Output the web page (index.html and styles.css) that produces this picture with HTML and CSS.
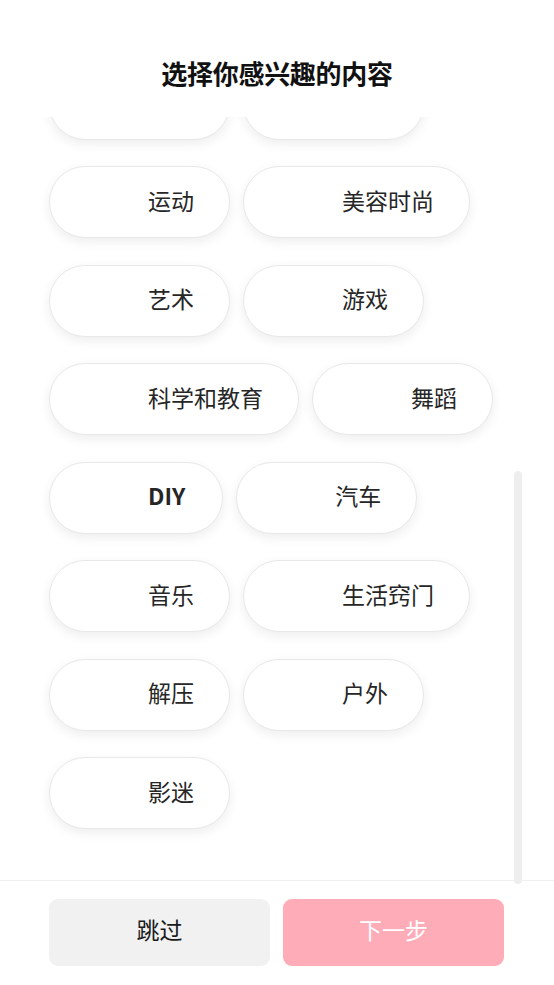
FILE: index.html
```html
<!DOCTYPE html>
<html lang="zh-CN">
<head>
<meta charset="utf-8">
<title>选择你感兴趣的内容</title>
<link rel="stylesheet" href="styles.css">
</head>
<body>
<div class="page">
  <header class="header">
    <h1 class="title">选择你感兴趣的内容</h1>
  </header>
  <main class="scroll">
    <div class="list">
      <div class="pill pill-clipped"></div>
      <div class="pill pill-clipped"></div>
      <div class="pill">运动</div>
      <div class="pill">美容时尚</div>
      <div class="pill">艺术</div>
      <div class="pill">游戏</div>
      <div class="pill">科学和教育</div>
      <div class="pill">舞蹈</div>
      <div class="pill pill-latin">DIY</div>
      <div class="pill">汽车</div>
      <div class="pill">音乐</div>
      <div class="pill">生活窍门</div>
      <div class="pill">解压</div>
      <div class="pill">户外</div>
      <div class="pill">影迷</div>
    </div>
  </main>
  <div class="thumb"></div>
  <footer class="footer">
    <button class="btn btn-skip">跳过</button>
    <button class="btn btn-next">下一步</button>
  </footer>
</div>
</body>
</html>
```

FILE: styles.css
```css
* {
  box-sizing: border-box;
}

html, body {
  margin: 0;
  padding: 0;
  background: #ffffff;
}

body {
  font-family: "Noto Sans CJK SC", "Noto Sans", sans-serif;
  color: #222222;
}

.page {
  position: relative;
  height: 985px;
  display: flex;
  flex-direction: column;
  overflow: hidden;
}

.header {
  flex: none;
  height: 117px;
  padding-top: 55px;
  display: flex;
  justify-content: center;
}

.title {
  margin: 0;
  font-size: 26px;
  line-height: 36px;
  font-weight: 700;
  color: #111111;
  letter-spacing: -0.3px;
}

.scroll {
  flex: none;
  height: 763px;
  overflow: hidden;
  display: flex;
  flex-direction: column;
  justify-content: flex-end;
}

.list {
  flex: none;
  display: flex;
  flex-wrap: wrap;
  align-content: flex-start;
  column-gap: 13px;
  row-gap: 26.5px;
  padding: 0 49px 51px 49px;
}

.pill {
  height: 72px;
  display: flex;
  align-items: center;
  padding: 0 35px 4px 98px;
  border: 1px solid #e8e8e8;
  border-radius: 36px;
  background: #ffffff;
  box-shadow: 0 4px 12px rgba(0, 0, 0, 0.07);
  font-size: 23px;
  line-height: 1;
  color: #262626;
  white-space: nowrap;
}

.pill-clipped {
  width: 181px;
}

.pill-latin {
  font-weight: 700;
  padding-right: 37px;
}

.thumb {
  position: absolute;
  left: 514px;
  top: 471px;
  width: 8px;
  height: 413px;
  border-radius: 4px;
  background: #eeeeee;
  z-index: 2;
}

.footer {
  flex: none;
  border-top: 1px solid #f0f0f0;
  padding: 18px 50px 0 49px;
  display: grid;
  grid-template-columns: 221px 221px;
  column-gap: 13px;
  background: #ffffff;
}

.btn {
  height: 67px;
  border: none;
  border-radius: 9px;
  font-family: "Noto Sans CJK SC", "Noto Sans", sans-serif;
  font-size: 23px;
  line-height: 1;
  display: flex;
  align-items: center;
  justify-content: center;
  padding: 0 0 6px 0;
}

.btn-skip {
  background: #f1f1f1;
  color: #1a1a1a;
}

.btn-next {
  background: #ffacb9;
  color: #ffffff;
}
```
